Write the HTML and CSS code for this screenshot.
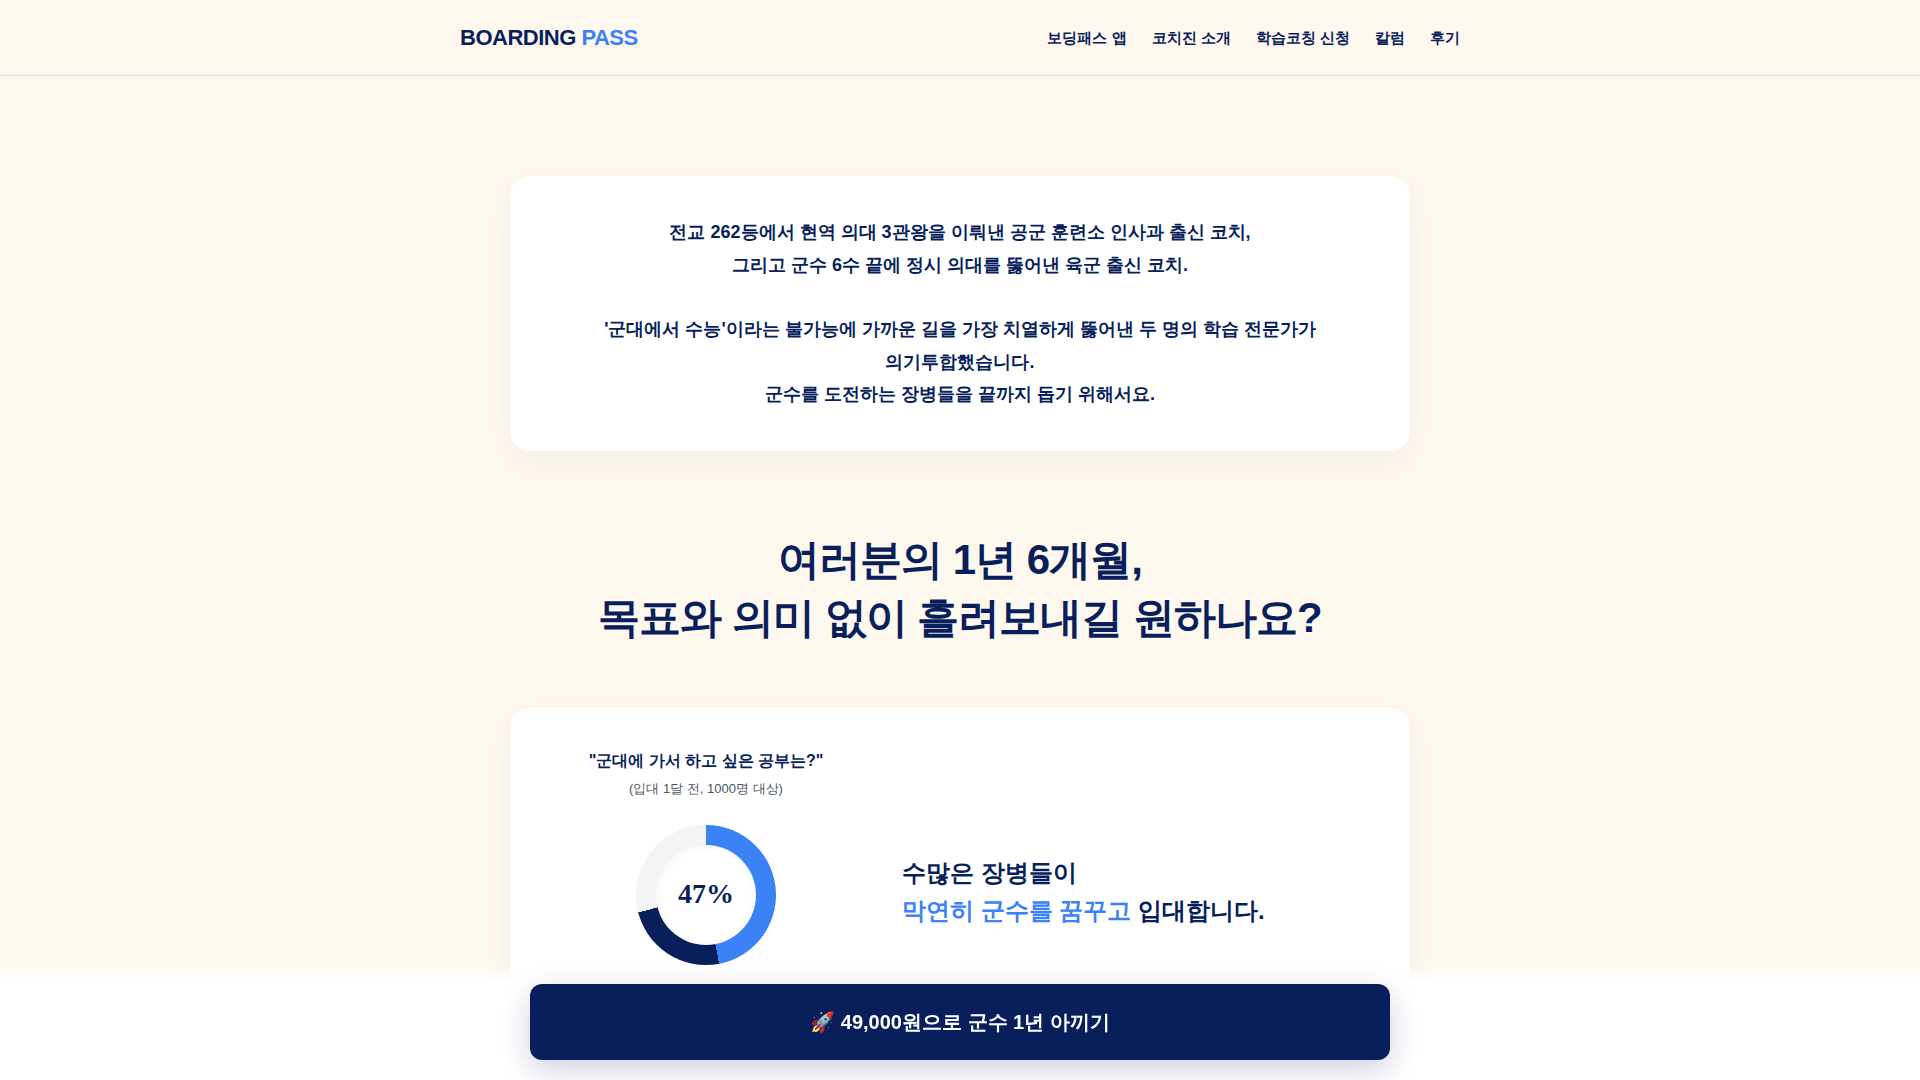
FILE: index.html
```
<!DOCTYPE html>
<html lang="ko">
<head>
  <meta charset="UTF-8">
  <meta name="viewport" content="width=device-width, initial-scale=1.0">
  <title>BOARDING PASS</title>
  <link rel="stylesheet" href="styles.css">
</head>
<body>

  <header class="header">
    <div class="header-inner">
      <a href="#" class="logo">BOARDING <span class="accent">PASS</span></a>
      <nav class="nav">
        <a href="#app">보딩패스 앱</a>
        <a href="#coaches">코치진 소개</a>
        <a href="#apply">학습코칭 신청</a>
        <a href="#column">칼럼</a>
        <a href="#review">후기</a>
      </nav>
    </div>
  </header>

  <main class="container">
    <section class="card intro">
      <p>
        전교 262등에서 현역 의대 3관왕을 이뤄낸 공군 훈련소 인사과 출신 코치,<br>
        그리고 군수 6수 끝에 정시 의대를 뚫어낸 육군 출신 코치.<br>
        <br>
        '군대에서 수능'이라는 불가능에 가까운 길을 가장 치열하게 뚫어낸 두 명의 학습 전문가가<br>
        의기투합했습니다.<br>
        군수를 도전하는 장병들을 끝까지 돕기 위해서요.
      </p>
    </section>

    <h1 class="title">여러분의 1년 6개월,<br>목표와 의미 없이 흘려보내길 원하나요?</h1>

    <section class="card stats">
      <div class="chart">
        <h2 class="chart-title">"군대에 가서 하고 싶은 공부는?"</h2>
        <p class="chart-sub">(입대 1달 전, 1000명 대상)</p>
        <div class="donut">
          <div class="donut-hole">47%</div>
        </div>
      </div>
      <p class="stats-text">수많은 장병들이<br><span class="accent">막연히 군수를 꿈꾸고</span> 입대합니다.</p>
    </section>
  </main>

  <div class="bottom-bar">
    <a href="#apply" class="cta">🚀 49,000원으로 군수 1년 아끼기</a>
  </div>

</body>
</html>
```

FILE: styles.css
```
* {
  box-sizing: border-box;
  margin: 0;
  padding: 0;
}

body {
  background: #fff8ee;
  color: #081f5c;
  font-family: "Liberation Sans", sans-serif;
  line-height: 1.6;
  word-break: keep-all;
}

a {
  color: inherit;
  text-decoration: none;
}

.accent {
  color: #3b82f6;
}

/* header */
.header {
  position: sticky;
  top: 0;
  z-index: 10;
  padding: 20px;
  background: #fff8ee;
  border-bottom: 1px solid #e0e0e0;
}

.header-inner {
  display: flex;
  justify-content: space-between;
  align-items: center;
  max-width: 1000px;
  margin: 0 auto;
}

.logo {
  font-size: 22px;
  font-weight: 800;
  letter-spacing: -0.5px;
}

.nav {
  display: flex;
  gap: 25px;
  font-size: 15px;
  font-weight: 600;
}

.nav a:hover {
  color: #3b82f6;
}

/* content */
.container {
  max-width: 940px;
  margin: 0 auto;
  padding: 100px 20px 140px;
}

.card {
  padding: 40px;
  background: #fff;
  border-radius: 20px;
  box-shadow: 0 10px 30px rgba(8, 31, 92, 0.05);
}

.intro {
  font-size: 18px;
  font-weight: 600;
  line-height: 1.8;
  text-align: center;
}

.title {
  margin: 80px 0 60px;
  font-size: 42px;
  font-weight: 900;
  line-height: 1.4;
  letter-spacing: -1px;
  text-align: center;
}

.stats {
  display: grid;
  grid-template-columns: 2fr 3fr;
  gap: 40px;
  align-items: center;
}

.chart {
  display: flex;
  flex-direction: column;
  align-items: center;
  padding-bottom: 72px;
}

.chart-title {
  margin-bottom: 5px;
  font-size: 16px;
}

.chart-sub {
  margin-bottom: 25px;
  color: #4b5563;
  font-size: 13px;
}

.donut {
  display: flex;
  justify-content: center;
  align-items: center;
  width: 140px;
  height: 140px;
  border-radius: 50%;
  background: conic-gradient(#3b82f6 0% 47%, #081f5c 47% 71%, #f3f4f6 71% 100%);
}

.donut-hole {
  display: flex;
  justify-content: center;
  align-items: center;
  width: 100px;
  height: 100px;
  border-radius: 50%;
  background: #fff;
  box-shadow: inset 0 0 10px rgba(0, 0, 0, 0.05);
  font-family: "Liberation Serif", serif;
  font-size: 28px;
  font-weight: 700;
}

.stats-text {
  font-size: 24px;
  font-weight: 700;
}

/* fixed button */
.bottom-bar {
  position: fixed;
  left: 0;
  right: 0;
  bottom: 0;
  z-index: 20;
  padding: 20px;
  background: linear-gradient(to top, #fff 85%, rgba(255, 255, 255, 0));
}

.cta {
  display: block;
  max-width: 860px;
  margin: 0 auto;
  padding: 22px;
  background: #081f5c;
  border-radius: 12px;
  box-shadow: 0 10px 30px rgba(8, 31, 92, 0.2);
  color: #fff;
  font-size: 20px;
  font-weight: 700;
  text-align: center;
}
```
